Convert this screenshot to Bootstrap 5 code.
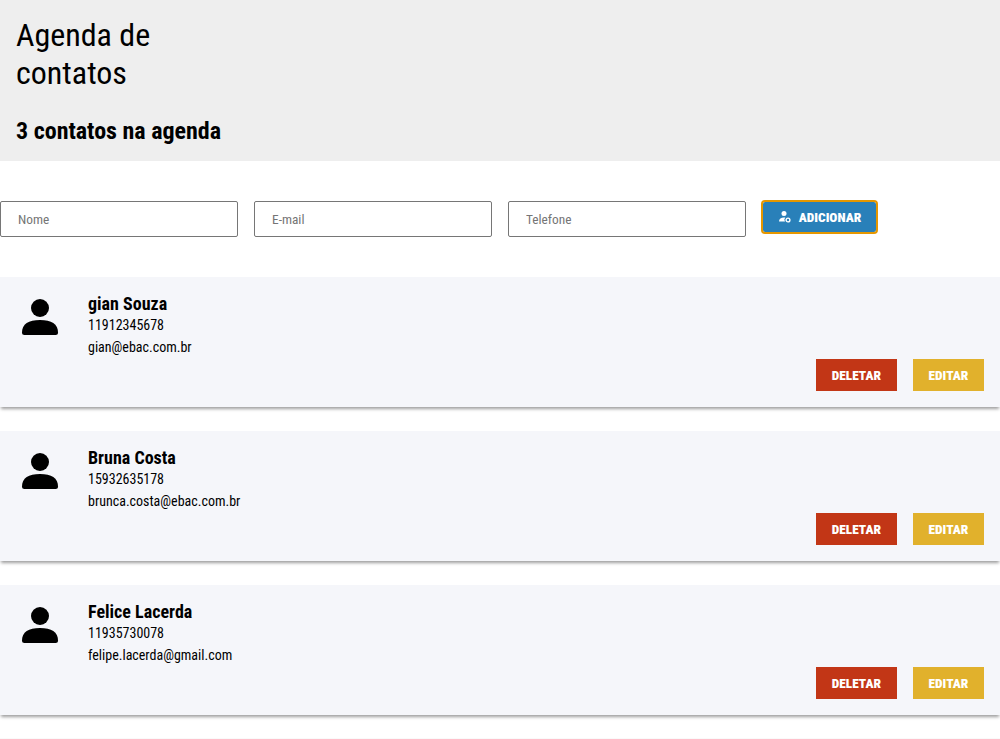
<!DOCTYPE html>
<html lang="pt-BR">
<head>
<meta charset="utf-8">
<title>Agenda de contatos</title>
<link rel="stylesheet" href="https://cdn.jsdelivr.net/npm/bootstrap@5.3.0/dist/css/bootstrap.min.css">
<style>
body{font-family:"Roboto Condensed",Roboto,sans-serif;color:#000;background:#fff;overflow:hidden}
.topo{background:#eee;height:161px}
.topo h1{font-size:32px;line-height:38px;font-weight:400;width:180px;margin-bottom:25px}
.topo h2{font-size:24px;line-height:28px;font-weight:700}
.campo{width:238px;height:36px;border:1px solid #767676;border-radius:2px;padding:0 17px;font-size:13.333px;color:#000}
.campo::placeholder{color:#757575}
.adicionar{width:113px;height:30px;margin:1px 0 0 1px;padding:1px 0 0 1px;background:#2980b9;outline:2px solid #e59700;border-radius:2px;border:0}
.rotulo{font-size:13.333px;font-weight:900;color:#fff;line-height:16px}
.adicionar svg{margin-top:-2px}
.contato{background:#f5f6fa;height:130px;padding:16px;box-shadow:0 3px 3px -1px rgba(0,0,0,.38)}
.contato h3{font-size:18px;line-height:21px;font-weight:700}
.contato p{font-size:14px;line-height:22px}
.acao{height:32px;border:0;padding:2px 0 0}
.deletar{background:#c23616;width:81px}
.editar{background:#e1b12c;width:71px}
.lista{height:462px;border-bottom:1px solid #fafafa}
</style>
<script src="https://cdn.jsdelivr.net/npm/bootstrap@5.3.0/dist/js/bootstrap.bundle.min.js"></script>
</head>
<body>
<svg class="d-none"><symbol id="pessoa" viewBox="0 0 48 48"><circle cx="24" cy="15" r="9"/><path d="M6 39.500C6 31 12.500 27 24 27s18 4 18 12.500Q42 42 39.500 42h-31Q6 42 6 39.500z"/></symbol></svg>
<header class="topo p-3">
<h1>Agenda de contatos</h1>
<h2 class="m-0">3 contatos na agenda</h2>
</header>
<form class="d-flex gap-3 align-items-start mt-4 pt-3 mb-4 pb-3">
<input class="campo" type="text" placeholder="Nome">
<input class="campo" type="email" placeholder="E-mail">
<input class="campo" type="tel" placeholder="Telefone">
<button type="button" class="adicionar rotulo d-flex align-items-center justify-content-center gap-2">
<svg width="12" height="12" viewBox="0 0 12 12" fill="#fff"><circle cx="5" cy="2.500" r="2.500"/><path d="M0 10.500C0 8 2 6.500 5 6.500q.7 0 1.300.1A3 3 0 0 0 6 10.500z"/><circle cx="9" cy="9" r="1.900" fill="none" stroke="#fff" stroke-width="1.400"/></svg>
<span>ADICIONAR</span></button>
</form>
<main class="lista d-flex flex-column gap-4">
<article class="contato d-flex align-items-start">
<svg width="48" height="48"><use href="#pessoa"/></svg>
<div class="ms-4"><h3 class="m-0">gian Souza</h3><p class="m-0">11912345678</p><p class="m-0">gian@ebac.com.br</p></div>
<div class="d-flex gap-3 ms-auto align-self-end"><button class="acao rotulo deletar">DELETAR</button><button class="acao rotulo editar">EDITAR</button></div>
</article>
<article class="contato d-flex align-items-start">
<svg width="48" height="48"><use href="#pessoa"/></svg>
<div class="ms-4"><h3 class="m-0">Bruna Costa</h3><p class="m-0">15932635178</p><p class="m-0">brunca.costa@ebac.com.br</p></div>
<div class="d-flex gap-3 ms-auto align-self-end"><button class="acao rotulo deletar">DELETAR</button><button class="acao rotulo editar">EDITAR</button></div>
</article>
<article class="contato d-flex align-items-start">
<svg width="48" height="48"><use href="#pessoa"/></svg>
<div class="ms-4"><h3 class="m-0">Felice Lacerda</h3><p class="m-0">11935730078</p><p class="m-0">felipe.lacerda@gmail.com</p></div>
<div class="d-flex gap-3 ms-auto align-self-end"><button class="acao rotulo deletar">DELETAR</button><button class="acao rotulo editar">EDITAR</button></div>
</article>
</main>
</body>
</html>
